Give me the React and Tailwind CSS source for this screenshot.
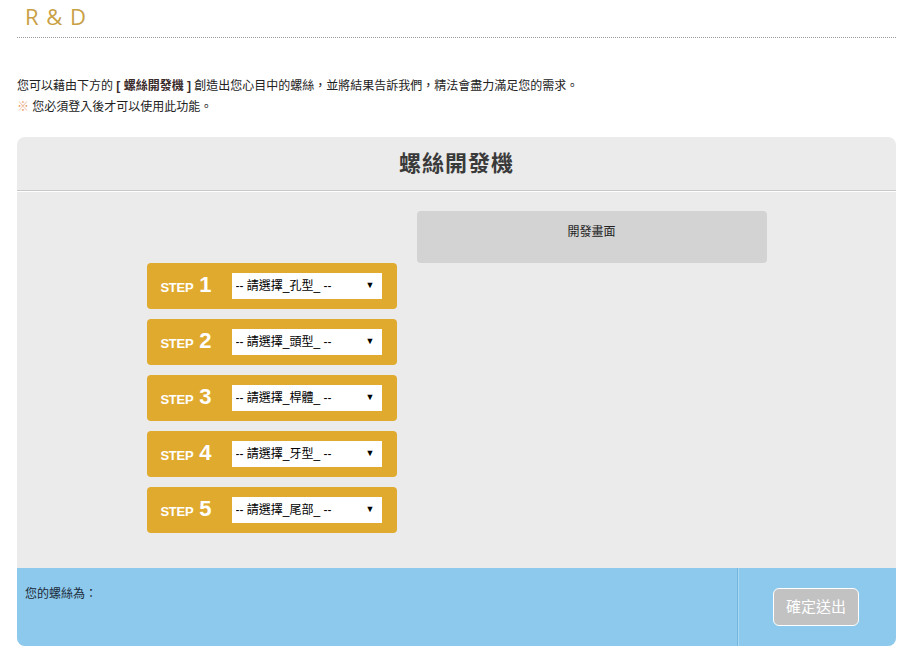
import React, { useState } from "react";

const steps = [
  { no: 1, label: "孔型" },
  { no: 2, label: "頭型" },
  { no: 3, label: "桿體" },
  { no: 4, label: "牙型" },
  { no: 5, label: "尾部" },
];

function StepRow({ no, label }) {
  return (
    <div className="flex items-center h-[46px] rounded-[4px] bg-[#e0aa2f] pl-[14px]">
      <span className="w-[71px] flex items-baseline text-white font-bold font-['Liberation_Sans',sans-serif]">
        <span className="text-[13px] tracking-[-0.3px]">STEP</span>
        <span className="text-[22px] ml-[6px] leading-none">{no}</span>
      </span>
      <div className="relative w-[150px] h-[26px] bg-white">
        <select className="appearance-none w-full h-full bg-transparent pl-[4px] text-[12px] text-black outline-none font-['Liberation_Sans','Noto_Sans_CJK_TC',sans-serif]">
          <option>-- 請選擇_{label}_ --</option>
        </select>
        <span className="pointer-events-none absolute right-[7px] top-[6px] text-[9px] text-black">▼</span>
      </div>
    </div>
  );
}

export default function App() {
  const [result] = useState("");

  return (
    <div className="w-[917px] min-h-[653px] bg-white pl-[17px] pr-[21px] text-[#333] font-['Liberation_Sans','Noto_Sans_CJK_TC',sans-serif]">
      {/* Page heading */}
      <div className="pt-[3px] pb-[8px] border-b border-dotted border-[#999]">
        <h1 className="pl-[8px] text-[22px] leading-[26px] tracking-[1px] text-[#c9a045] font-['Open_Sans',sans-serif]">
          R &amp; D
        </h1>
      </div>

      {/* Intro */}
      <div className="pt-[38px] text-[12px] leading-[21px] text-[#222]">
        <p>
          您可以藉由下方的 <b className="text-[#3a2a2a]">[ 螺絲開發機 ]</b> 創造出您心目中的螺絲，並將結果告訴我們，精法會盡力滿足您的需求。
        </p>
        <p>
          <span className="text-[#e8a070]">※</span> 您必須登入後才可以使用此功能。
        </p>
      </div>

      {/* Builder panel */}
      <div className="mt-[19px] rounded-[8px] bg-[#ebebeb] overflow-hidden">
        <div className="h-[54px] flex items-center justify-center border-b border-[#c8c8c8] shadow-[0_1px_0_#fff]">
          <h2 className="text-[22px] font-bold tracking-[1px] text-[#3a3a3a]">螺絲開發機</h2>
        </div>

        <div className="w-[620px] mx-auto pt-[20px] pb-[35px]">
          <div className="flex justify-end">
            <div className="w-[350px] h-[52px] rounded-[4px] bg-[#d3d3d3] pt-[12px] text-center text-[12px] text-[#222]">
              開發畫面
            </div>
          </div>
          <div className="w-[250px] flex flex-col gap-[10px]">
            {steps.map((s) => (
              <StepRow key={s.no} {...s} />
            ))}
          </div>
        </div>

        {/* Result bar */}
        <div className="flex h-[78px] bg-[#8dc9ec]">
          <div className="flex-1 pl-[8px] pt-[17px] text-[12px] text-[#1a2a3a] border-r border-[#74b6de] shadow-[1px_0_0_#a9d8f3]">
            您的螺絲為：{result}
          </div>
          <div className="w-[158px] flex items-start justify-center pt-[20px] pr-[2px]">
            <button className="w-[86px] h-[38px] rounded-[6px] border border-white bg-[#c2c2c2] text-white text-[15px]">
              確定送出
            </button>
          </div>
        </div>
      </div>
    </div>
  );
}
